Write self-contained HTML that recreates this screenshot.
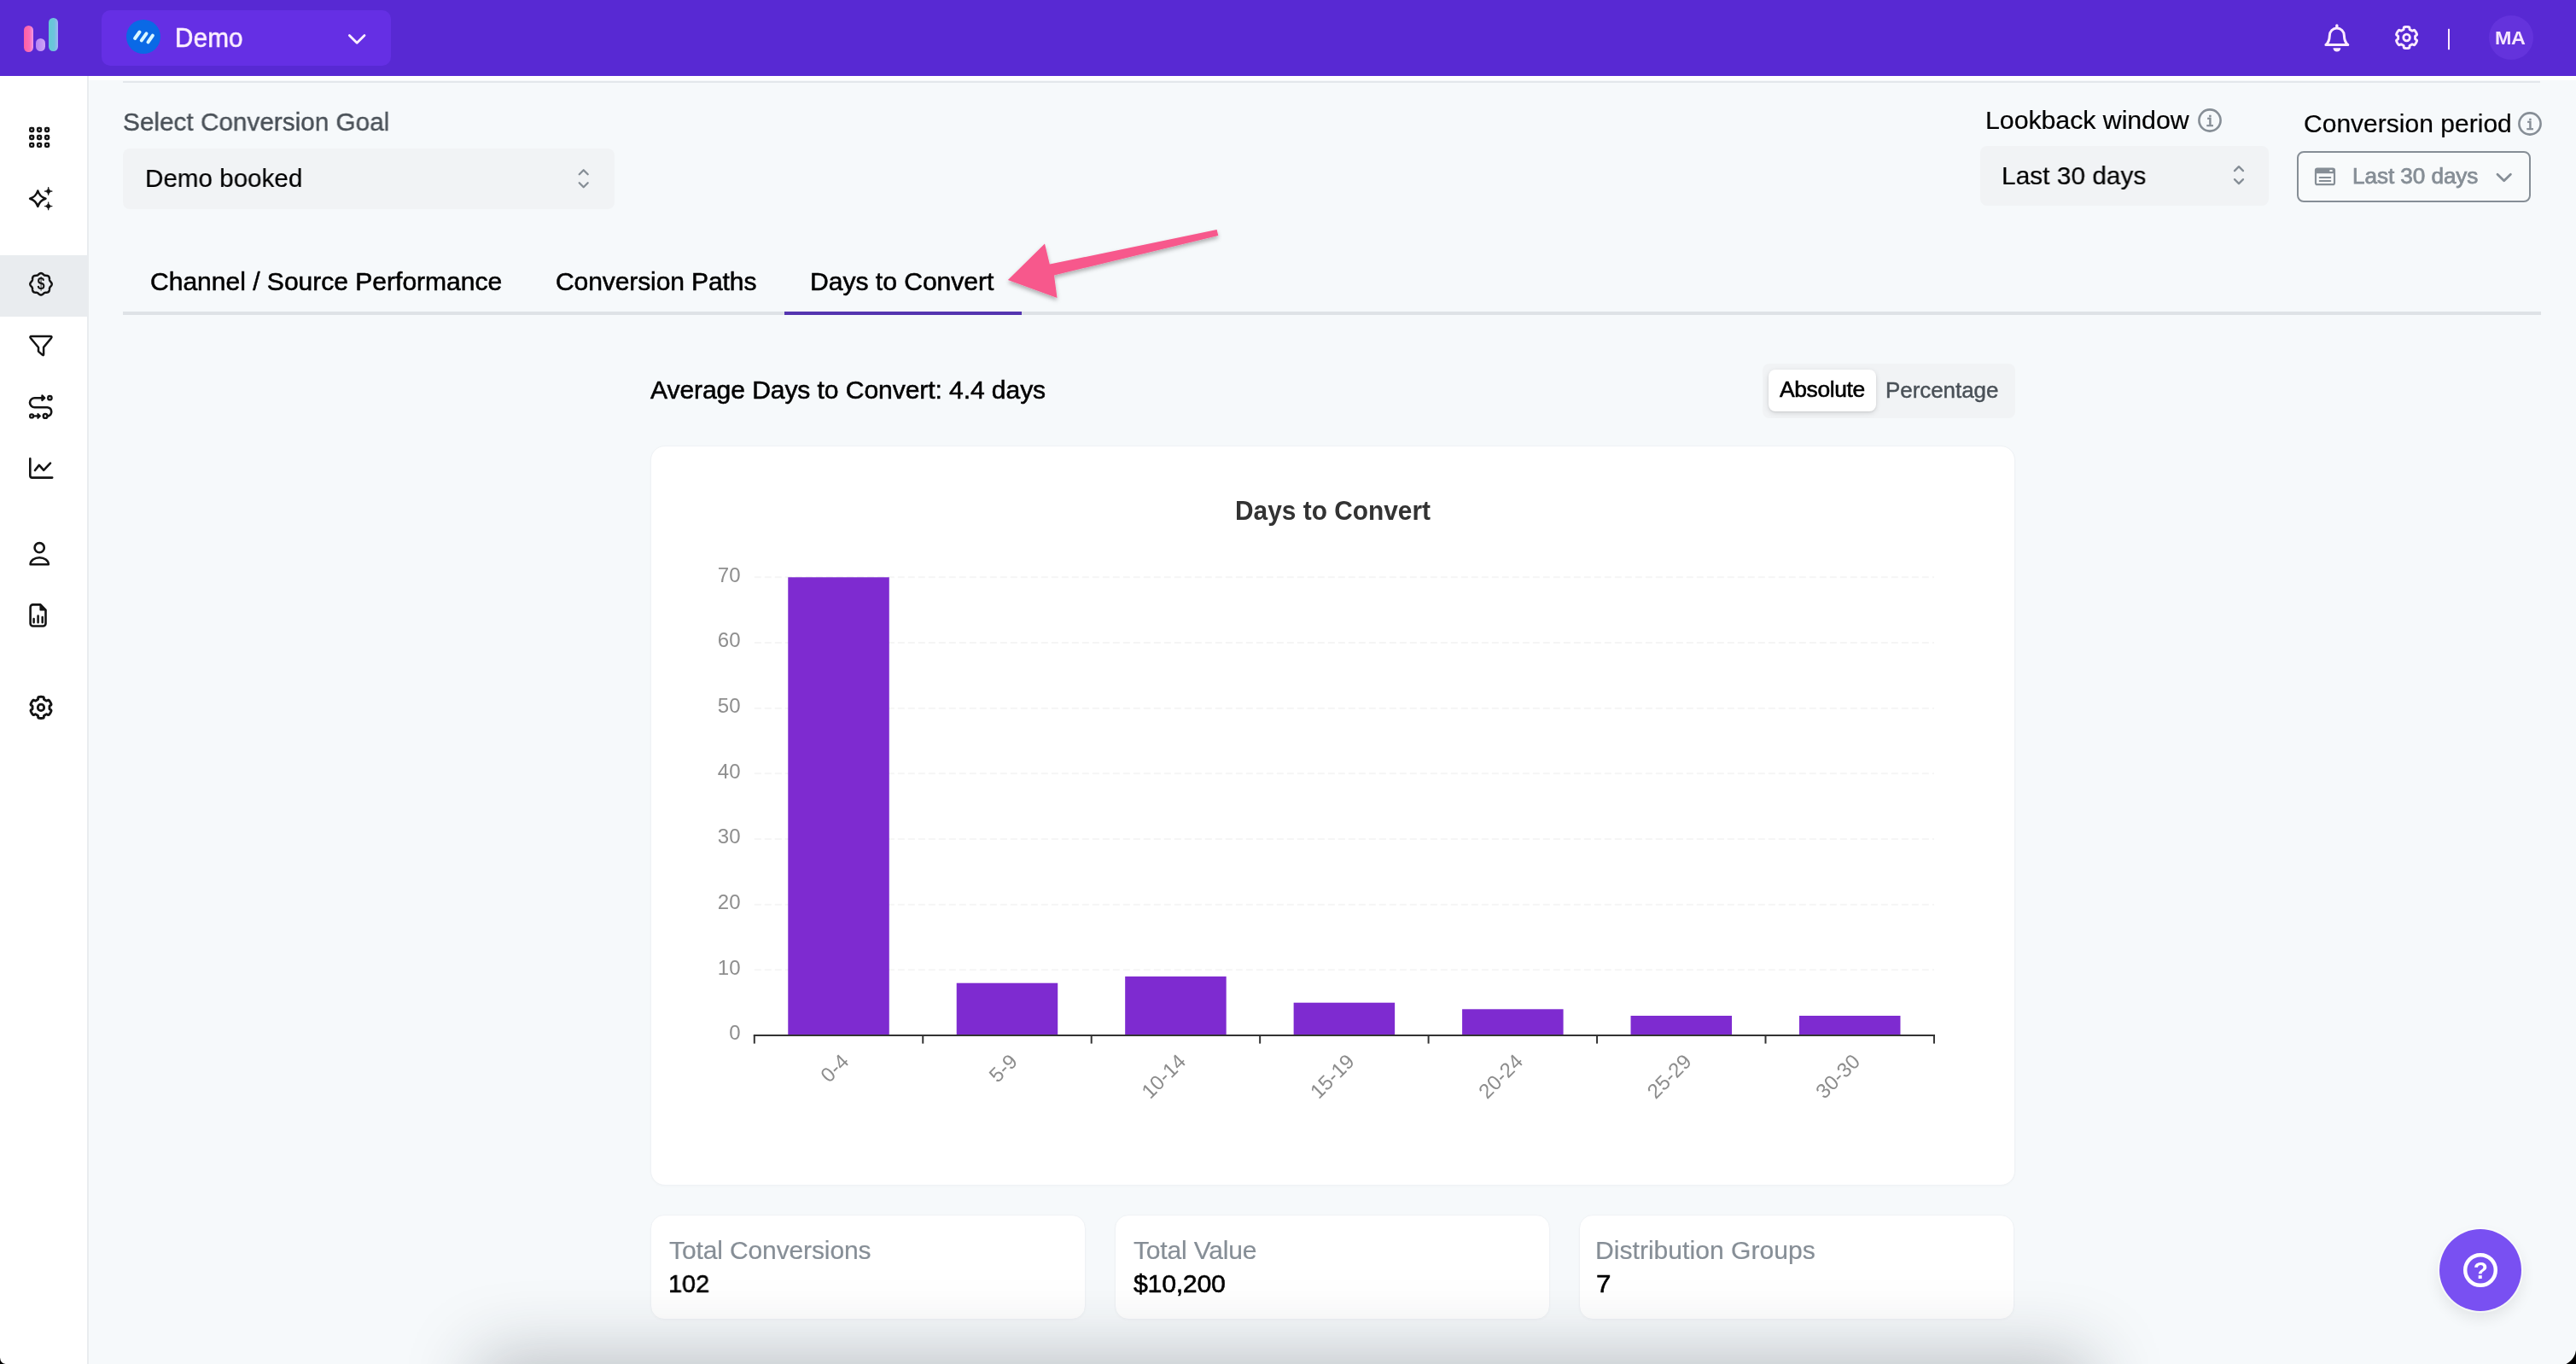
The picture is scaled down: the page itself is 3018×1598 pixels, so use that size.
<!DOCTYPE html><html lang="en"><head><meta charset="utf-8"><title>Days to Convert</title><style>
html,body{margin:0;padding:0}
main,nav,header,section,figure{display:block;margin:0;padding:0}
body{width:3018px;height:1598px;overflow:hidden;position:relative;background:#f6f9fb;font-family:'Liberation Sans',sans-serif}
.t{position:absolute;white-space:nowrap;line-height:1;transform-origin:0 0;will-change:transform;font-family:'Liberation Sans',sans-serif}
.abs{position:absolute}
#header{left:0;top:0;width:3018px;height:88.5px;background:#5829d3}
#strip{left:0;top:88.5px;width:3018px;height:5.5px;background:#fff}
#sidebar{left:0;top:88.5px;width:102px;height:1510px;background:#fff;border-right:2px solid #e9ecef}
#active{left:0;top:299px;width:102px;height:72px;background:#e9ecef}
#topline{left:144px;top:94.5px;width:2832px;height:2px;background:#e3e7eb}
#pill{left:118.8px;top:11.8px;width:339.6px;height:65px;border-radius:10px;background:#652fe4}
#bluec{left:147.8px;top:23.4px;width:40px;height:40px;border-radius:50%;background:#0a69e6}
#avatar{left:2916px;top:18px;width:52px;height:52px;border-radius:50%;background:#6433dc}
#sel1{left:144px;top:173.8px;width:576px;height:71px;border-radius:8px;background:#f1f3f5}
#sel2{left:2319.5px;top:171px;width:338px;height:69.5px;border-radius:8px;background:#f1f3f5}
#datebtn{left:2690.5px;top:177px;width:274.5px;height:59.5px;border-radius:8px;border:2px solid #868e96;box-sizing:border-box;background:#f8fafb}
#tabline{left:144px;top:365px;width:2833px;height:4px;background:#dee2e6}
#tabactive{left:919px;top:365px;width:278px;height:4px;background:#5535b0}
#seg{left:2065px;top:426px;width:295.5px;height:63.5px;border-radius:8px;background:#f1f3f5}
#segact{left:2072px;top:433px;width:126px;height:48.5px;border-radius:8px;background:#fff;box-shadow:0 2px 6px rgba(0,0,0,.12),0 1px 2px rgba(0,0,0,.08)}
.card{background:#fff;border:1.5px solid #eff2f5;box-sizing:border-box;box-shadow:0 1px 3px rgba(0,0,0,.025)}
#chartcard{left:761.5px;top:521.5px;width:1599px;height:867.5px;border-radius:17px}
#c1{left:761.5px;top:1422.5px;width:510.5px;height:123.5px;border-radius:16px}
#c2{left:1305.5px;top:1422.5px;width:510.5px;height:123.5px;border-radius:16px}
#c3{left:1849.5px;top:1422.5px;width:510.5px;height:123.5px;border-radius:16px}
#help{left:2858px;top:1440px;width:96px;height:96px;border-radius:50%;background:#7950f2;box-shadow:0 0 0 2px rgba(255,255,255,.55),0 8px 18px rgba(0,0,0,.09)}
#botshadow{left:610px;top:1638px;width:1790px;height:60px;background:#000;box-shadow:0 0 84px 50px rgba(30,40,50,.27)}
</style></head><body>
<main>
<div class="abs" id="strip"></div><div class="abs" id="topline"></div>
<section id="filters">
<div class="abs" id="sel1"></div><div class="abs" id="sel2"></div><div class="abs" id="datebtn"></div>
<div class="t" id="selgoal" style="left:143.52px;top:127.69px;font-size:29.9px;font-weight:400;color:#495057;letter-spacing:-0.000px;transform:scaleX(0.9948);-webkit-text-stroke:0.4px #495057;">Select Conversion Goal</div>
<div class="t" id="demobooked" style="left:170.13px;top:193.89px;font-size:29.9px;font-weight:400;color:#000;letter-spacing:0.048px;transform:scaleX(0.9879);-webkit-text-stroke:0.2px #000;">Demo booked</div>
<div class="t" id="lookback" style="left:2326.28px;top:125.69px;font-size:29.9px;font-weight:400;color:#000;letter-spacing:-0.061px;transform:scaleX(1.0152);-webkit-text-stroke:0.2px #000;">Lookback window</div>
<div class="t" id="last30a" style="left:2344.51px;top:190.89px;font-size:29.9px;font-weight:400;color:#000;letter-spacing:0.043px;transform:scaleX(0.9963);-webkit-text-stroke:0.2px #000;">Last 30 days</div>
<div class="t" id="convperiod" style="left:2698.70px;top:129.69px;font-size:29.9px;font-weight:400;color:#000;letter-spacing:0.012px;transform:scaleX(1.0042);-webkit-text-stroke:0.2px #000;">Conversion period</div>
<div class="t" id="last30b" style="left:2756.13px;top:194.47px;font-size:25.2px;font-weight:400;color:#868e96;letter-spacing:-0.069px;transform:scaleX(1.0377);-webkit-text-stroke:0.75px #868e96;">Last 30 days</div>
</section>
<div id="tabs" role="tablist">
<div class="abs" id="tabline"></div><div class="abs" id="tabactive"></div>
<div class="t" id="tab1" role="tab" style="left:175.50px;top:315.29px;font-size:29.9px;font-weight:400;color:#000;letter-spacing:-0.021px;transform:scaleX(1.0059);-webkit-text-stroke:0.55px #000;">Channel / Source Performance</div>
<div class="t" id="tab2" role="tab" style="left:651.30px;top:315.29px;font-size:29.9px;font-weight:400;color:#000;letter-spacing:-0.095px;transform:scaleX(1.0041);-webkit-text-stroke:0.55px #000;">Conversion Paths</div>
<div class="t" id="tab3" role="tab" style="left:949.29px;top:315.29px;font-size:29.9px;font-weight:400;color:#000;letter-spacing:-0.034px;transform:scaleX(1.0075);-webkit-text-stroke:0.55px #000;">Days to Convert</div>
</div>
<section id="daystoconvert">
<div class="t" id="avg" style="left:762.30px;top:441.99px;font-size:29.9px;font-weight:400;color:#000;letter-spacing:-0.080px;transform:scaleX(1.0058);-webkit-text-stroke:0.55px #000;">Average Days to Convert: 4.4 days</div>
<div id="modeswitch" role="radiogroup"><div class="abs" id="seg"></div><div class="abs" id="segact"></div>
<div class="t" id="abs" role="radio" style="left:2085.12px;top:443.90px;font-size:25.4px;font-weight:400;color:#000;letter-spacing:-0.327px;transform:scaleX(1.0387);-webkit-text-stroke:0.55px #000;">Absolute</div>
<div class="t" id="pct" role="radio" style="left:2208.54px;top:444.50px;font-size:25.4px;font-weight:400;color:#495057;letter-spacing:-0.032px;transform:scaleX(1.0217);-webkit-text-stroke:0.45px #495057;">Percentage</div>
</div>
<figure style="margin:0"><div class="abs card" id="chartcard"></div>
<svg id="chart" style="position:absolute;left:0;top:0;will-change:transform" width="3018" height="1598" viewBox="0 0 3018 1598">
<line x1="883.8" x2="2266" y1="1136.3" y2="1136.3" stroke="#f5f5f5" stroke-width="2" stroke-dasharray="8 4"/>
<line x1="883.8" x2="2266" y1="1059.7" y2="1059.7" stroke="#f5f5f5" stroke-width="2" stroke-dasharray="8 4"/>
<line x1="883.8" x2="2266" y1="983.0" y2="983.0" stroke="#f5f5f5" stroke-width="2" stroke-dasharray="8 4"/>
<line x1="883.8" x2="2266" y1="906.3" y2="906.3" stroke="#f5f5f5" stroke-width="2" stroke-dasharray="8 4"/>
<line x1="883.8" x2="2266" y1="829.7" y2="829.7" stroke="#f5f5f5" stroke-width="2" stroke-dasharray="8 4"/>
<line x1="883.8" x2="2266" y1="753.0" y2="753.0" stroke="#f5f5f5" stroke-width="2" stroke-dasharray="8 4"/>
<line x1="883.8" x2="2266" y1="676.3" y2="676.3" stroke="#f5f5f5" stroke-width="2" stroke-dasharray="8 4"/>
<text x="867.5" y="1218.4" text-anchor="end" font-family="Liberation Sans, sans-serif" font-size="24" fill="#8e8e8e">0</text>
<text x="867.5" y="1141.7" text-anchor="end" font-family="Liberation Sans, sans-serif" font-size="24" fill="#8e8e8e">10</text>
<text x="867.5" y="1065.1" text-anchor="end" font-family="Liberation Sans, sans-serif" font-size="24" fill="#8e8e8e">20</text>
<text x="867.5" y="988.4" text-anchor="end" font-family="Liberation Sans, sans-serif" font-size="24" fill="#8e8e8e">30</text>
<text x="867.5" y="911.7" text-anchor="end" font-family="Liberation Sans, sans-serif" font-size="24" fill="#8e8e8e">40</text>
<text x="867.5" y="835.1" text-anchor="end" font-family="Liberation Sans, sans-serif" font-size="24" fill="#8e8e8e">50</text>
<text x="867.5" y="758.4" text-anchor="end" font-family="Liberation Sans, sans-serif" font-size="24" fill="#8e8e8e">60</text>
<text x="867.5" y="681.7" text-anchor="end" font-family="Liberation Sans, sans-serif" font-size="24" fill="#8e8e8e">70</text>
<rect x="923.27" y="676.3" width="118.5" height="536.7" fill="#7e2bd0"/>
<rect x="1120.72" y="1151.7" width="118.5" height="61.3" fill="#7e2bd0"/>
<rect x="1318.17" y="1144.0" width="118.5" height="69.0" fill="#7e2bd0"/>
<rect x="1515.62" y="1174.7" width="118.5" height="38.3" fill="#7e2bd0"/>
<rect x="1713.07" y="1182.3" width="118.5" height="30.7" fill="#7e2bd0"/>
<rect x="1910.52" y="1190.0" width="118.5" height="23.0" fill="#7e2bd0"/>
<rect x="2107.97" y="1190.0" width="118.5" height="23.0" fill="#7e2bd0"/>
<line x1="882.8" x2="2267" y1="1213" y2="1213" stroke="#333" stroke-width="2"/>
<line x1="883.8" x2="883.8" y1="1213" y2="1222.6" stroke="#333" stroke-width="2"/>
<line x1="1081.25" x2="1081.25" y1="1213" y2="1222.6" stroke="#333" stroke-width="2"/>
<line x1="1278.6999999999998" x2="1278.6999999999998" y1="1213" y2="1222.6" stroke="#333" stroke-width="2"/>
<line x1="1476.1499999999999" x2="1476.1499999999999" y1="1213" y2="1222.6" stroke="#333" stroke-width="2"/>
<line x1="1673.6" x2="1673.6" y1="1213" y2="1222.6" stroke="#333" stroke-width="2"/>
<line x1="1871.05" x2="1871.05" y1="1213" y2="1222.6" stroke="#333" stroke-width="2"/>
<line x1="2068.5" x2="2068.5" y1="1213" y2="1222.6" stroke="#333" stroke-width="2"/>
<line x1="2265.95" x2="2265.95" y1="1213" y2="1222.6" stroke="#333" stroke-width="2"/>
<text transform="translate(990.1,1239.2) rotate(-45)" x="0" y="8.2" text-anchor="end" font-family="Liberation Sans, sans-serif" font-size="24" fill="#8c8c8c">0-4</text>
<text transform="translate(1187.6,1239.2) rotate(-45)" x="0" y="8.2" text-anchor="end" font-family="Liberation Sans, sans-serif" font-size="24" fill="#8c8c8c">5-9</text>
<text transform="translate(1385.0,1239.2) rotate(-45)" x="0" y="8.2" text-anchor="end" font-family="Liberation Sans, sans-serif" font-size="24" fill="#8c8c8c">10-14</text>
<text transform="translate(1582.5,1239.2) rotate(-45)" x="0" y="8.2" text-anchor="end" font-family="Liberation Sans, sans-serif" font-size="24" fill="#8c8c8c">15-19</text>
<text transform="translate(1779.9,1239.2) rotate(-45)" x="0" y="8.2" text-anchor="end" font-family="Liberation Sans, sans-serif" font-size="24" fill="#8c8c8c">20-24</text>
<text transform="translate(1977.4,1239.2) rotate(-45)" x="0" y="8.2" text-anchor="end" font-family="Liberation Sans, sans-serif" font-size="24" fill="#8c8c8c">25-29</text>
<text transform="translate(2174.8,1239.2) rotate(-45)" x="0" y="8.2" text-anchor="end" font-family="Liberation Sans, sans-serif" font-size="24" fill="#8c8c8c">30-30</text>
<text x="1447" y="608.8" textLength="229" lengthAdjust="spacingAndGlyphs" font-family="Liberation Sans, sans-serif" font-size="31.5" font-weight="700" fill="#333">Days to Convert</text>
</svg>
</figure>
<div id="stats"><div class="abs card" id="c1"></div><div class="abs card" id="c2"></div><div class="abs card" id="c3"></div>
<div class="t" id="tc" style="left:784.10px;top:1449.99px;font-size:29.9px;font-weight:400;color:#868e96;letter-spacing:-0.119px;transform:scaleX(1.0035);-webkit-text-stroke:0.2px #868e96;">Total Conversions</div>
<div class="t" id="tcv" style="left:783.17px;top:1489.09px;font-size:29.9px;font-weight:400;color:#000;letter-spacing:-0.048px;transform:scaleX(0.9662);-webkit-text-stroke:0.55px #000;">102</div>
<div class="t" id="tv" style="left:1328.30px;top:1449.99px;font-size:29.9px;font-weight:400;color:#868e96;letter-spacing:-0.190px;transform:scaleX(1.0050);-webkit-text-stroke:0.2px #868e96;">Total Value</div>
<div class="t" id="tvv" style="left:1328.28px;top:1489.09px;font-size:29.9px;font-weight:400;color:#000;letter-spacing:-0.286px;transform:scaleX(1.0145);-webkit-text-stroke:0.55px #000;">$10,200</div>
<div class="t" id="dg" style="left:1868.69px;top:1449.99px;font-size:29.9px;font-weight:400;color:#868e96;letter-spacing:0.011px;transform:scaleX(1.0069);-webkit-text-stroke:0.2px #868e96;">Distribution Groups</div>
<div class="t" id="dgv" style="left:1869.62px;top:1489.09px;font-size:29.9px;font-weight:400;color:#000;letter-spacing:0.000px;transform:scaleX(1.0500);-webkit-text-stroke:0.55px #000;">7</div>
</div>
</section>
<div class="abs" id="help"></div>
</main>
<nav><div class="abs" id="sidebar"></div><div class="abs" id="active"></div></nav>
<header><div class="abs" id="header"></div>
<div class="abs" style="left:27.9px;top:29.5px;width:10.8px;height:31px;border-radius:5.4px;background:linear-gradient(90deg,#ff5fa2 0%,#fb6cb8 60%,#f29ae6 100%)"></div><div class="abs" style="left:42.2px;top:45.4px;width:11.3px;height:15.1px;border-radius:5.6px;background:linear-gradient(90deg,#b684f3,#cfa4f7)"></div><div class="abs" style="left:57.4px;top:20.9px;width:10.4px;height:39.6px;border-radius:5.2px;background:linear-gradient(90deg,#62c9d4 0%,#6ec3dd 60%,#a3b4f7 100%)"></div>
<div class="abs" id="pill"></div><div class="abs" id="bluec"></div>
<svg class="abs" style="left:147.8px;top:23.4px" width="40" height="40" viewBox="147.8 23.4 40 40"><path d="M157.9 45.4L163.3 37.9M165.6 47.8L171.3 39.8M173.3 49.8L178.7 42" stroke="#d9f6ff" stroke-width="4" stroke-linecap="round"/></svg>
<div class="abs" id="avatar"></div>
<div class="t" id="demo" style="left:205.12px;top:29.07px;font-size:31.1px;font-weight:400;color:#fdf0ff;letter-spacing:0.190px;transform:scaleX(0.9519);-webkit-text-stroke:0.55px #fdf0ff;">Demo</div>
<div class="t" id="ma" style="left:2923.30px;top:33.91px;font-size:22.2px;font-weight:700;color:#f6e6ff;letter-spacing:-0.381px;transform:scaleX(1.0528);">MA</div>
</header>
<svg id="icons" aria-hidden="true" style="position:absolute;left:0;top:0;will-change:transform" width="3018" height="1598" viewBox="0 0 3018 1598" fill="none" stroke-linecap="round" stroke-linejoin="round">
<rect x="35.2" y="150.0" width="4" height="4" rx="1.2" stroke="#141414" stroke-width="2.4"/>
<rect x="35.2" y="159.0" width="4" height="4" rx="1.2" stroke="#141414" stroke-width="2.4"/>
<rect x="35.2" y="167.9" width="4" height="4" rx="1.2" stroke="#141414" stroke-width="2.4"/>
<rect x="44.1" y="150.0" width="4" height="4" rx="1.2" stroke="#141414" stroke-width="2.4"/>
<rect x="44.1" y="159.0" width="4" height="4" rx="1.2" stroke="#141414" stroke-width="2.4"/>
<rect x="44.1" y="167.9" width="4" height="4" rx="1.2" stroke="#141414" stroke-width="2.4"/>
<rect x="53.1" y="150.0" width="4" height="4" rx="1.2" stroke="#141414" stroke-width="2.4"/>
<rect x="53.1" y="159.0" width="4" height="4" rx="1.2" stroke="#141414" stroke-width="2.4"/>
<rect x="53.1" y="167.9" width="4" height="4" rx="1.2" stroke="#141414" stroke-width="2.4"/>
<path d="M44.3 223.5A13.799999999999999 13.799999999999999 0 0 0 53.5 232.7A13.799999999999999 13.799999999999999 0 0 0 44.3 241.89999999999998A13.799999999999999 13.799999999999999 0 0 0 35.099999999999994 232.7A13.799999999999999 13.799999999999999 0 0 0 44.3 223.5Z" stroke="#141414" stroke-width="2.5"/>
<path d="M56.7 219.5A4.6 4.6 0 0 0 61.300000000000004 224.1A4.6 4.6 0 0 0 56.7 228.7A4.6 4.6 0 0 0 52.1 224.1A4.6 4.6 0 0 0 56.7 219.5Z" fill="#141414" stroke="#141414" stroke-width="0.8"/>
<path d="M56.7 237.0A4.6 4.6 0 0 0 61.300000000000004 241.6A4.6 4.6 0 0 0 56.7 246.2A4.6 4.6 0 0 0 52.1 241.6A4.6 4.6 0 0 0 56.7 237.0Z" fill="#141414" stroke="#141414" stroke-width="0.8"/>
<path d="M60.70 332.80L60.69 333.02L60.66 333.24L60.61 333.46L60.55 333.68L60.47 333.89L60.37 334.10L60.26 334.30L60.13 334.50L60.00 334.70L59.86 334.89L59.71 335.08L59.56 335.26L59.41 335.43L59.26 335.61L59.11 335.78L58.97 335.94L58.83 336.11L58.70 336.28L58.58 336.44L58.48 336.61L58.38 336.78L58.29 336.96L58.22 337.14L58.16 337.32L58.10 337.51L58.06 337.71L58.03 337.91L58.00 338.12L57.98 338.33L57.96 338.55L57.94 338.77L57.93 339.00L57.91 339.24L57.89 339.47L57.86 339.71L57.83 339.94L57.78 340.17L57.73 340.40L57.66 340.63L57.59 340.84L57.49 341.05L57.39 341.25L57.27 341.44L57.13 341.62L56.98 341.78L56.82 341.93L56.64 342.07L56.45 342.19L56.25 342.29L56.04 342.39L55.83 342.46L55.60 342.53L55.37 342.58L55.14 342.63L54.91 342.66L54.67 342.69L54.44 342.71L54.20 342.73L53.97 342.74L53.75 342.76L53.53 342.78L53.32 342.80L53.11 342.83L52.91 342.86L52.71 342.90L52.52 342.96L52.34 343.02L52.16 343.09L51.98 343.18L51.81 343.28L51.64 343.38L51.48 343.50L51.31 343.63L51.14 343.77L50.98 343.91L50.81 344.06L50.63 344.21L50.46 344.36L50.28 344.51L50.09 344.66L49.90 344.80L49.70 344.93L49.50 345.06L49.30 345.17L49.09 345.27L48.88 345.35L48.66 345.41L48.44 345.46L48.22 345.49L48.00 345.50L47.78 345.49L47.56 345.46L47.34 345.41L47.12 345.35L46.91 345.27L46.70 345.17L46.50 345.06L46.30 344.93L46.10 344.80L45.91 344.66L45.72 344.51L45.54 344.36L45.37 344.21L45.19 344.06L45.02 343.91L44.86 343.77L44.69 343.63L44.52 343.50L44.36 343.38L44.19 343.28L44.02 343.18L43.84 343.09L43.66 343.02L43.48 342.96L43.29 342.90L43.09 342.86L42.89 342.83L42.68 342.80L42.47 342.78L42.25 342.76L42.03 342.74L41.80 342.73L41.56 342.71L41.33 342.69L41.09 342.66L40.86 342.63L40.63 342.58L40.40 342.53L40.17 342.46L39.96 342.39L39.75 342.29L39.55 342.19L39.36 342.07L39.18 341.93L39.02 341.78L38.87 341.62L38.73 341.44L38.61 341.25L38.51 341.05L38.41 340.84L38.34 340.63L38.27 340.40L38.22 340.17L38.17 339.94L38.14 339.71L38.11 339.47L38.09 339.24L38.07 339.00L38.06 338.77L38.04 338.55L38.02 338.33L38.00 338.12L37.97 337.91L37.94 337.71L37.90 337.51L37.84 337.32L37.78 337.14L37.71 336.96L37.62 336.78L37.52 336.61L37.42 336.44L37.30 336.28L37.17 336.11L37.03 335.94L36.89 335.78L36.74 335.61L36.59 335.43L36.44 335.26L36.29 335.08L36.14 334.89L36.00 334.70L35.87 334.50L35.74 334.30L35.63 334.10L35.53 333.89L35.45 333.68L35.39 333.46L35.34 333.24L35.31 333.02L35.30 332.80L35.31 332.58L35.34 332.36L35.39 332.14L35.45 331.92L35.53 331.71L35.63 331.50L35.74 331.30L35.87 331.10L36.00 330.90L36.14 330.71L36.29 330.52L36.44 330.34L36.59 330.17L36.74 329.99L36.89 329.82L37.03 329.66L37.17 329.49L37.30 329.32L37.42 329.16L37.52 328.99L37.62 328.82L37.71 328.64L37.78 328.46L37.84 328.28L37.90 328.09L37.94 327.89L37.97 327.69L38.00 327.48L38.02 327.27L38.04 327.05L38.06 326.83L38.07 326.60L38.09 326.36L38.11 326.13L38.14 325.89L38.17 325.66L38.22 325.43L38.27 325.20L38.34 324.97L38.41 324.76L38.51 324.55L38.61 324.35L38.73 324.16L38.87 323.98L39.02 323.82L39.18 323.67L39.36 323.53L39.55 323.41L39.75 323.31L39.96 323.21L40.17 323.14L40.40 323.07L40.63 323.02L40.86 322.97L41.09 322.94L41.33 322.91L41.56 322.89L41.80 322.87L42.03 322.86L42.25 322.84L42.47 322.82L42.68 322.80L42.89 322.77L43.09 322.74L43.29 322.70L43.48 322.64L43.66 322.58L43.84 322.51L44.02 322.42L44.19 322.32L44.36 322.22L44.52 322.10L44.69 321.97L44.86 321.83L45.02 321.69L45.19 321.54L45.37 321.39L45.54 321.24L45.72 321.09L45.91 320.94L46.10 320.80L46.30 320.67L46.50 320.54L46.70 320.43L46.91 320.33L47.12 320.25L47.34 320.19L47.56 320.14L47.78 320.11L48.00 320.10L48.22 320.11L48.44 320.14L48.66 320.19L48.88 320.25L49.09 320.33L49.30 320.43L49.50 320.54L49.70 320.67L49.90 320.80L50.09 320.94L50.28 321.09L50.46 321.24L50.63 321.39L50.81 321.54L50.98 321.69L51.14 321.83L51.31 321.97L51.48 322.10L51.64 322.22L51.81 322.32L51.98 322.42L52.16 322.51L52.34 322.58L52.52 322.64L52.71 322.70L52.91 322.74L53.11 322.77L53.32 322.80L53.53 322.82L53.75 322.84L53.97 322.86L54.20 322.87L54.44 322.89L54.67 322.91L54.91 322.94L55.14 322.97L55.37 323.02L55.60 323.07L55.83 323.14L56.04 323.21L56.25 323.31L56.45 323.41L56.64 323.53L56.82 323.67L56.98 323.82L57.13 323.98L57.27 324.16L57.39 324.35L57.49 324.55L57.59 324.76L57.66 324.97L57.73 325.20L57.78 325.43L57.83 325.66L57.86 325.89L57.89 326.13L57.91 326.36L57.93 326.60L57.94 326.83L57.96 327.05L57.98 327.27L58.00 327.48L58.03 327.69L58.06 327.89L58.10 328.09L58.16 328.28L58.22 328.46L58.29 328.64L58.38 328.82L58.48 328.99L58.58 329.16L58.70 329.32L58.83 329.49L58.97 329.66L59.11 329.82L59.26 329.99L59.41 330.17L59.56 330.34L59.71 330.52L59.86 330.71L60.00 330.90L60.13 331.10L60.26 331.30L60.37 331.50L60.47 331.71L60.55 331.92L60.61 332.14L60.66 332.36L60.69 332.58Z" stroke="#141414" stroke-width="2.5"/>
<text transform="translate(48,339) scale(0.84,1)" x="0" y="0" text-anchor="middle" font-family="Liberation Sans, sans-serif" font-size="19.5" font-weight="700" fill="#141414" stroke="none">$</text>
<path d="M37 394.1H58.8Q61.6 394.1 59.9 396.3L51.1 406.9V415Q51.1 416.9 49.5 415.6L45 411.6V407L36 396.3Q34.3 394.1 37 394.1Z" stroke="#141414" stroke-width="2.5"/>
<circle cx="58.4" cy="466.2" r="2.2" stroke="#141414" stroke-width="2.3"/>
<path d="M50.8 466.2H40.6A5.6 5.5 0 0 0 40.6 477.2H55.6A5.3 5.2 0 0 1 56.2 487.4" stroke="#141414" stroke-width="2.6"/>
<path d="M49.4 463.4L52.3 466.2L49.4 469Z" stroke="#141414" stroke-width="2.2" fill="#141414"/>
<circle cx="53.1" cy="487.4" r="2.4" stroke="#141414" stroke-width="2.4"/>
<circle cx="37.1" cy="487.4" r="2.0" stroke="#141414" stroke-width="2.3"/>
<path d="M40.6 487.4H45.6" stroke="#141414" stroke-width="2.4"/><path d="M44.4 484.9L47 487.4L44.4 489.9Z" stroke="#141414" stroke-width="2" fill="#141414"/>
<path d="M35.3 537.4V557.2A2.4 2.4 0 0 0 37.7 559.6H61.2" stroke="#141414" stroke-width="2.6"/>
<path d="M41 551L45.9 544.9L51.2 550.8L59 542.6" stroke="#141414" stroke-width="2.6"/>
<circle cx="46.2" cy="641.7" r="5.6" stroke="#141414" stroke-width="2.6"/>
<path d="M35.6 661.2A10.6 8 0 0 1 56.8 661.2Z" stroke="#141414" stroke-width="2.6"/>
<path d="M38.6 708.4H47.4L53.5 714.6V730.5A3 3 0 0 1 50.5 733.5H38.6A3 3 0 0 1 35.6 730.5V711.4A3 3 0 0 1 38.6 708.4Z" stroke="#141414" stroke-width="2.6"/>
<path d="M47.4 708.8V714.4H53.2Z" stroke="#141414" stroke-width="2" fill="#141414"/>
<path d="M39.6 725V729.3M44.6 721.6V729.3M49.7 723V729.3" stroke="#141414" stroke-width="2.5"/>
<path d="M58.00 828.90L58.00 828.73L58.00 828.55L57.99 828.38L57.98 828.20L57.97 828.03L57.96 827.85L57.96 827.68L57.96 827.50L57.99 827.32L58.09 827.12L58.32 826.89L58.72 826.62L59.25 826.30L59.69 825.99L59.93 825.70L60.01 825.46L60.01 825.23L59.97 825.01L59.91 824.80L59.84 824.59L59.76 824.39L59.68 824.18L59.60 823.98L59.51 823.78L59.42 823.58L59.32 823.38L59.23 823.18L59.13 822.98L59.02 822.79L58.91 822.60L58.80 822.41L58.69 822.22L58.57 822.04L58.45 821.85L58.32 821.67L58.19 821.49L58.06 821.32L57.93 821.14L57.79 820.97L57.65 820.80L57.50 820.64L57.35 820.48L57.18 820.34L56.99 820.22L56.73 820.17L56.37 820.23L55.87 820.46L55.34 820.75L54.90 820.97L54.59 821.05L54.37 821.04L54.19 820.97L54.04 820.89L53.89 820.80L53.74 820.70L53.60 820.60L53.45 820.51L53.30 820.42L53.15 820.33L53.00 820.24L52.85 820.15L52.70 820.07L52.54 819.99L52.39 819.91L52.23 819.83L52.07 819.75L51.92 819.67L51.77 819.57L51.63 819.45L51.50 819.27L51.42 818.96L51.39 818.47L51.37 817.86L51.32 817.32L51.20 816.97L51.02 816.77L50.83 816.66L50.62 816.59L50.40 816.54L50.19 816.49L49.97 816.46L49.75 816.42L49.54 816.39L49.32 816.37L49.10 816.35L48.88 816.33L48.66 816.32L48.44 816.31L48.22 816.30L48.00 816.30L47.78 816.30L47.56 816.31L47.34 816.32L47.12 816.33L46.90 816.35L46.68 816.37L46.46 816.39L46.25 816.42L46.03 816.46L45.81 816.49L45.60 816.54L45.38 816.59L45.17 816.66L44.98 816.77L44.80 816.97L44.68 817.32L44.63 817.86L44.61 818.47L44.58 818.96L44.50 819.27L44.37 819.45L44.23 819.57L44.08 819.67L43.93 819.75L43.77 819.83L43.61 819.91L43.46 819.99L43.30 820.07L43.15 820.15L43.00 820.24L42.85 820.33L42.70 820.42L42.55 820.51L42.40 820.60L42.26 820.70L42.11 820.80L41.96 820.89L41.81 820.97L41.63 821.04L41.41 821.05L41.10 820.97L40.66 820.75L40.13 820.46L39.63 820.23L39.27 820.17L39.01 820.22L38.82 820.34L38.65 820.48L38.50 820.64L38.35 820.80L38.21 820.97L38.07 821.14L37.94 821.32L37.81 821.49L37.68 821.67L37.55 821.85L37.43 822.04L37.31 822.22L37.20 822.41L37.09 822.60L36.98 822.79L36.87 822.98L36.77 823.18L36.68 823.38L36.58 823.58L36.49 823.78L36.40 823.98L36.32 824.18L36.24 824.39L36.16 824.59L36.09 824.80L36.03 825.01L35.99 825.23L35.99 825.46L36.07 825.70L36.31 825.99L36.75 826.30L37.28 826.62L37.68 826.89L37.91 827.12L38.01 827.32L38.04 827.50L38.04 827.68L38.04 827.85L38.03 828.03L38.02 828.20L38.01 828.38L38.00 828.55L38.00 828.73L38.00 828.90L38.00 829.07L38.00 829.25L38.01 829.42L38.02 829.60L38.03 829.77L38.04 829.95L38.04 830.12L38.04 830.30L38.01 830.48L37.91 830.68L37.68 830.91L37.28 831.18L36.75 831.50L36.31 831.81L36.07 832.10L35.99 832.34L35.99 832.57L36.03 832.79L36.09 833.00L36.16 833.21L36.24 833.41L36.32 833.62L36.40 833.82L36.49 834.02L36.58 834.22L36.68 834.42L36.77 834.62L36.87 834.82L36.98 835.01L37.09 835.20L37.20 835.39L37.31 835.58L37.43 835.76L37.55 835.95L37.68 836.13L37.81 836.31L37.94 836.48L38.07 836.66L38.21 836.83L38.35 837.00L38.50 837.16L38.65 837.32L38.82 837.46L39.01 837.58L39.27 837.63L39.63 837.57L40.13 837.34L40.66 837.05L41.10 836.83L41.41 836.75L41.63 836.76L41.81 836.83L41.96 836.91L42.11 837.00L42.26 837.10L42.40 837.20L42.55 837.29L42.70 837.38L42.85 837.47L43.00 837.56L43.15 837.65L43.30 837.73L43.46 837.81L43.61 837.89L43.77 837.97L43.93 838.05L44.08 838.13L44.23 838.23L44.37 838.35L44.50 838.53L44.58 838.84L44.61 839.33L44.63 839.94L44.68 840.48L44.80 840.83L44.98 841.03L45.17 841.14L45.38 841.21L45.60 841.26L45.81 841.31L46.03 841.34L46.25 841.38L46.46 841.41L46.68 841.43L46.90 841.45L47.12 841.47L47.34 841.48L47.56 841.49L47.78 841.50L48.00 841.50L48.22 841.50L48.44 841.49L48.66 841.48L48.88 841.47L49.10 841.45L49.32 841.43L49.54 841.41L49.75 841.38L49.97 841.34L50.19 841.31L50.40 841.26L50.62 841.21L50.83 841.14L51.02 841.03L51.20 840.83L51.32 840.48L51.37 839.94L51.39 839.33L51.42 838.84L51.50 838.53L51.63 838.35L51.77 838.23L51.92 838.13L52.07 838.05L52.23 837.97L52.39 837.89L52.54 837.81L52.70 837.73L52.85 837.65L53.00 837.56L53.15 837.47L53.30 837.38L53.45 837.29L53.60 837.20L53.74 837.10L53.89 837.00L54.04 836.91L54.19 836.83L54.37 836.76L54.59 836.75L54.90 836.83L55.34 837.05L55.87 837.34L56.37 837.57L56.73 837.63L56.99 837.58L57.18 837.46L57.35 837.32L57.50 837.16L57.65 837.00L57.79 836.83L57.93 836.66L58.06 836.48L58.19 836.31L58.32 836.13L58.45 835.95L58.57 835.76L58.69 835.58L58.80 835.39L58.91 835.20L59.02 835.01L59.13 834.82L59.23 834.62L59.32 834.42L59.42 834.22L59.51 834.02L59.60 833.82L59.68 833.62L59.76 833.41L59.84 833.21L59.91 833.00L59.97 832.79L60.01 832.57L60.01 832.34L59.93 832.10L59.69 831.81L59.25 831.50L58.72 831.18L58.32 830.91L58.09 830.68L57.99 830.48L57.96 830.30L57.96 830.12L57.96 829.95L57.97 829.77L57.98 829.60L57.99 829.42L58.00 829.25L58.00 829.07Z" stroke="#141414" stroke-width="2.9"/>
<circle cx="48" cy="828.9" r="3.7" stroke="#141414" stroke-width="2.8"/>
<path d="M2829.60 44.00L2829.60 43.83L2829.60 43.65L2829.59 43.48L2829.58 43.30L2829.57 43.13L2829.56 42.95L2829.56 42.78L2829.56 42.60L2829.59 42.42L2829.69 42.22L2829.92 41.99L2830.32 41.72L2830.85 41.40L2831.29 41.09L2831.53 40.80L2831.61 40.56L2831.61 40.33L2831.57 40.11L2831.51 39.90L2831.44 39.69L2831.36 39.49L2831.28 39.28L2831.20 39.08L2831.11 38.88L2831.02 38.68L2830.92 38.48L2830.83 38.28L2830.73 38.08L2830.62 37.89L2830.51 37.70L2830.40 37.51L2830.29 37.32L2830.17 37.14L2830.05 36.95L2829.92 36.77L2829.79 36.59L2829.66 36.42L2829.53 36.24L2829.39 36.07L2829.25 35.90L2829.10 35.74L2828.95 35.58L2828.78 35.44L2828.59 35.32L2828.33 35.27L2827.97 35.33L2827.47 35.56L2826.94 35.85L2826.50 36.07L2826.19 36.15L2825.97 36.14L2825.79 36.07L2825.64 35.99L2825.49 35.90L2825.34 35.80L2825.20 35.70L2825.05 35.61L2824.90 35.52L2824.75 35.43L2824.60 35.34L2824.45 35.25L2824.30 35.17L2824.14 35.09L2823.99 35.01L2823.83 34.93L2823.67 34.85L2823.52 34.77L2823.37 34.67L2823.23 34.55L2823.10 34.37L2823.02 34.06L2822.99 33.57L2822.97 32.96L2822.92 32.42L2822.80 32.07L2822.62 31.87L2822.43 31.76L2822.22 31.69L2822.00 31.64L2821.79 31.59L2821.57 31.56L2821.35 31.52L2821.14 31.49L2820.92 31.47L2820.70 31.45L2820.48 31.43L2820.26 31.42L2820.04 31.41L2819.82 31.40L2819.60 31.40L2819.38 31.40L2819.16 31.41L2818.94 31.42L2818.72 31.43L2818.50 31.45L2818.28 31.47L2818.06 31.49L2817.85 31.52L2817.63 31.56L2817.41 31.59L2817.20 31.64L2816.98 31.69L2816.77 31.76L2816.58 31.87L2816.40 32.07L2816.28 32.42L2816.23 32.96L2816.21 33.57L2816.18 34.06L2816.10 34.37L2815.97 34.55L2815.83 34.67L2815.68 34.77L2815.53 34.85L2815.37 34.93L2815.21 35.01L2815.06 35.09L2814.90 35.17L2814.75 35.25L2814.60 35.34L2814.45 35.43L2814.30 35.52L2814.15 35.61L2814.00 35.70L2813.86 35.80L2813.71 35.90L2813.56 35.99L2813.41 36.07L2813.23 36.14L2813.01 36.15L2812.70 36.07L2812.26 35.85L2811.73 35.56L2811.23 35.33L2810.87 35.27L2810.61 35.32L2810.42 35.44L2810.25 35.58L2810.10 35.74L2809.95 35.90L2809.81 36.07L2809.67 36.24L2809.54 36.42L2809.41 36.59L2809.28 36.77L2809.15 36.95L2809.03 37.14L2808.91 37.32L2808.80 37.51L2808.69 37.70L2808.58 37.89L2808.47 38.08L2808.37 38.28L2808.28 38.48L2808.18 38.68L2808.09 38.88L2808.00 39.08L2807.92 39.28L2807.84 39.49L2807.76 39.69L2807.69 39.90L2807.63 40.11L2807.59 40.33L2807.59 40.56L2807.67 40.80L2807.91 41.09L2808.35 41.40L2808.88 41.72L2809.28 41.99L2809.51 42.22L2809.61 42.42L2809.64 42.60L2809.64 42.78L2809.64 42.95L2809.63 43.13L2809.62 43.30L2809.61 43.48L2809.60 43.65L2809.60 43.83L2809.60 44.00L2809.60 44.17L2809.60 44.35L2809.61 44.52L2809.62 44.70L2809.63 44.87L2809.64 45.05L2809.64 45.22L2809.64 45.40L2809.61 45.58L2809.51 45.78L2809.28 46.01L2808.88 46.28L2808.35 46.60L2807.91 46.91L2807.67 47.20L2807.59 47.44L2807.59 47.67L2807.63 47.89L2807.69 48.10L2807.76 48.31L2807.84 48.51L2807.92 48.72L2808.00 48.92L2808.09 49.12L2808.18 49.32L2808.28 49.52L2808.37 49.72L2808.47 49.92L2808.58 50.11L2808.69 50.30L2808.80 50.49L2808.91 50.68L2809.03 50.86L2809.15 51.05L2809.28 51.23L2809.41 51.41L2809.54 51.58L2809.67 51.76L2809.81 51.93L2809.95 52.10L2810.10 52.26L2810.25 52.42L2810.42 52.56L2810.61 52.68L2810.87 52.73L2811.23 52.67L2811.73 52.44L2812.26 52.15L2812.70 51.93L2813.01 51.85L2813.23 51.86L2813.41 51.93L2813.56 52.01L2813.71 52.10L2813.86 52.20L2814.00 52.30L2814.15 52.39L2814.30 52.48L2814.45 52.57L2814.60 52.66L2814.75 52.75L2814.90 52.83L2815.06 52.91L2815.21 52.99L2815.37 53.07L2815.53 53.15L2815.68 53.23L2815.83 53.33L2815.97 53.45L2816.10 53.63L2816.18 53.94L2816.21 54.43L2816.23 55.04L2816.28 55.58L2816.40 55.93L2816.58 56.13L2816.77 56.24L2816.98 56.31L2817.20 56.36L2817.41 56.41L2817.63 56.44L2817.85 56.48L2818.06 56.51L2818.28 56.53L2818.50 56.55L2818.72 56.57L2818.94 56.58L2819.16 56.59L2819.38 56.60L2819.60 56.60L2819.82 56.60L2820.04 56.59L2820.26 56.58L2820.48 56.57L2820.70 56.55L2820.92 56.53L2821.14 56.51L2821.35 56.48L2821.57 56.44L2821.79 56.41L2822.00 56.36L2822.22 56.31L2822.43 56.24L2822.62 56.13L2822.80 55.93L2822.92 55.58L2822.97 55.04L2822.99 54.43L2823.02 53.94L2823.10 53.63L2823.23 53.45L2823.37 53.33L2823.52 53.23L2823.67 53.15L2823.83 53.07L2823.99 52.99L2824.14 52.91L2824.30 52.83L2824.45 52.75L2824.60 52.66L2824.75 52.57L2824.90 52.48L2825.05 52.39L2825.20 52.30L2825.34 52.20L2825.49 52.10L2825.64 52.01L2825.79 51.93L2825.97 51.86L2826.19 51.85L2826.50 51.93L2826.94 52.15L2827.47 52.44L2827.97 52.67L2828.33 52.73L2828.59 52.68L2828.78 52.56L2828.95 52.42L2829.10 52.26L2829.25 52.10L2829.39 51.93L2829.53 51.76L2829.66 51.58L2829.79 51.41L2829.92 51.23L2830.05 51.05L2830.17 50.86L2830.29 50.68L2830.40 50.49L2830.51 50.30L2830.62 50.11L2830.73 49.92L2830.83 49.72L2830.92 49.52L2831.02 49.32L2831.11 49.12L2831.20 48.92L2831.28 48.72L2831.36 48.51L2831.44 48.31L2831.51 48.10L2831.57 47.89L2831.61 47.67L2831.61 47.44L2831.53 47.20L2831.29 46.91L2830.85 46.60L2830.32 46.28L2829.92 46.01L2829.69 45.78L2829.59 45.58L2829.56 45.40L2829.56 45.22L2829.56 45.05L2829.57 44.87L2829.58 44.70L2829.59 44.52L2829.60 44.35L2829.60 44.17Z" stroke="#fdeaff" stroke-width="2.9"/>
<circle cx="2819.6" cy="44" r="3.8" stroke="#fdeaff" stroke-width="2.8"/>
<path d="M2724.9 52.5C2727.4 50.6 2729.1 47.6 2729.35 41.6A8.5 8.6 0 0 1 2746.35 41.6C2746.6 47.6 2748.3 50.6 2750.8 52.5Z" stroke="#fdeaff" stroke-width="3"/>
<path d="M2737.85 29.8V31.6" stroke="#fdeaff" stroke-width="3.3"/>
<path d="M2733.5 56.3H2742.3A4.4 4.3 0 0 1 2733.5 56.3Z" fill="#fdeaff" stroke="none"/>
<rect x="2868" y="33.8" width="2" height="24.4" fill="#fdeaff"/>
<path d="M409.4 41.4L418.2 50.2L427 41.4" stroke="#fdf0ff" stroke-width="2.8"/>
<path d="M678.7 204.3L683.7 199.3L688.7 204.3M678.7 214.3L683.7 219.3L688.7 214.3" stroke="#868e96" stroke-width="2.3"/>
<path d="M2618.0 200.1L2623 195.1L2628.0 200.1M2618.0 210.1L2623 215.1L2628.0 210.1" stroke="#868e96" stroke-width="2.3"/>
<path d="M2926 204.2L2933.7 211.8L2941.4 204.2" stroke="#868e96" stroke-width="2.8"/>
<rect x="2713" y="197.6" width="22" height="18.6" rx="2" stroke="#868e96" stroke-width="2.2"/>
<rect x="2713" y="197.6" width="22" height="5.6" fill="#868e96" stroke="none"/>
<path d="M2717.6 208H2730.4M2717.6 212H2730.4" stroke="#868e96" stroke-width="1.8"/>
<rect x="2729.4" y="199" width="3.2" height="2" fill="#f6f9fb" stroke="none"/>
<circle cx="2589" cy="141" r="12.6" stroke="#868e96" stroke-width="2.6"/>
<text transform="translate(2589,147.6) scale(0.76,1)" x="0" y="0" text-anchor="middle" font-family="Liberation Mono, monospace" font-size="19" font-weight="700" fill="#868e96" stroke="#868e96" stroke-width="0.5">i</text>
<circle cx="2964" cy="145" r="12.6" stroke="#868e96" stroke-width="2.6"/>
<text transform="translate(2964,151.6) scale(0.76,1)" x="0" y="0" text-anchor="middle" font-family="Liberation Mono, monospace" font-size="19" font-weight="700" fill="#868e96" stroke="#868e96" stroke-width="0.5">i</text>
<circle cx="2906" cy="1488" r="17.8" stroke="#fff" stroke-width="4.4"/>
<text x="2906.2" y="1498" text-anchor="middle" font-family="Liberation Sans, sans-serif" font-size="28" font-weight="700" fill="#fff" stroke="none">?</text>
<g filter="url(#ash)"><path d="M1180.9 328.1L1224 285.5L1229.8 309.6L1425.6 269.1L1427.3 276.1L1235 322.4L1238.5 349Z" fill="#f7598c" stroke="none"/></g>
<defs><filter id="ash" x="-10%" y="-20%" width="120%" height="150%"><feDropShadow dx="0" dy="3" stdDeviation="2.5" flood-color="#000" flood-opacity="0.3"/></filter></defs>
</svg>
<div class="abs" id="botshadow"></div>
<svg class="abs" style="left:0;top:1560px" width="3018" height="38" viewBox="0 1560 3018 38"><path d="M0 1590.5Q0.6 1597.4 6.5 1598H0Z" fill="#000"/><path d="M3018 1576.5A21 21 0 0 1 3006.5 1598H3018Z" fill="#000"/></svg>
</body></html>
